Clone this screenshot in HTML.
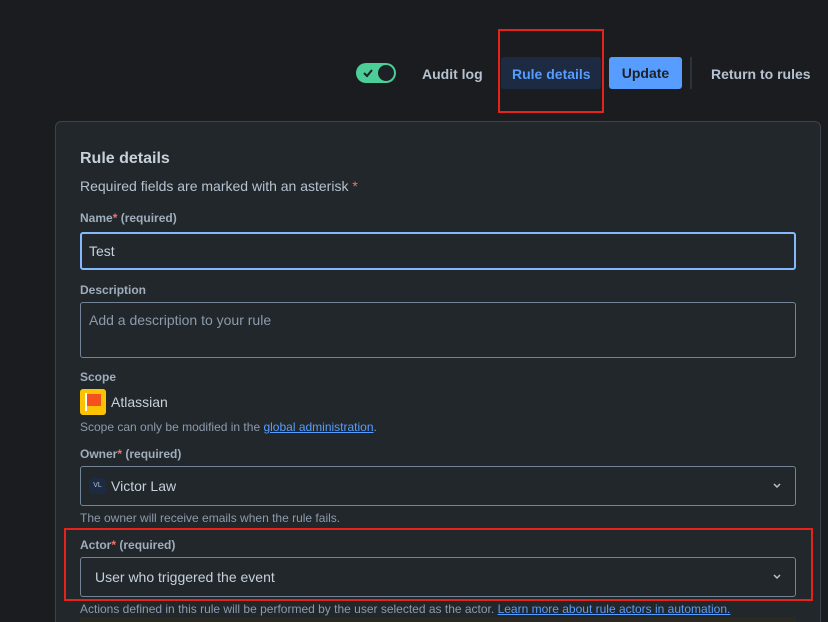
<!DOCTYPE html>
<html style="width:828px;height:622px;overflow:hidden"><head><style>
*{box-sizing:border-box;margin:0;padding:0}
body{width:828px;height:622px;overflow:hidden;background:#1a1c1f;font-family:"Liberation Sans",sans-serif;color:#c7d1db;position:relative}
.a{position:absolute}
.lbl{font-size:12px;font-weight:bold;color:#9fadbc}
.lbl .s{color:#f87168}
.help{font-size:12px;color:#8c9bab}
.inp{background:#22272b;border:1px solid #738496;border-radius:3px;font-size:14px;color:#c7d1db}
a{color:#579dff;text-decoration:underline}
</style></head><body>
<div class="a" style="left:356px;top:63px;width:40px;height:20px;border-radius:10px;background:#4bce97"></div>
<div class="a" style="left:378px;top:65px;width:16px;height:16px;border-radius:50%;background:#1d2125"></div>
<svg class="a" style="left:362px;top:67px" width="12" height="12"><path d="M2 6 L5 9 L10 3" stroke="#1d2125" stroke-width="2" fill="none"/></svg>
<div class="a" style="left:422px;top:66px;font-size:14px;font-weight:bold;color:#b6c2cf">Audit log</div>
<div class="a" style="left:501px;top:57px;width:100px;height:32px;background:#1c2b41;border-radius:3px"></div>
<div class="a" style="left:512px;top:66px;font-size:14px;font-weight:bold;color:#579dff">Rule details</div>
<div class="a" style="left:498px;top:29px;width:106px;height:84px;border:2px solid #e5231b"></div>
<div class="a" style="left:609px;top:57px;width:73px;height:32px;background:#579dff;border-radius:3px;font-size:14px;font-weight:bold;color:#1d2125;text-align:center;line-height:32px">Update</div>
<div class="a" style="left:690px;top:57px;width:2px;height:32px;background:#2c333a"></div>
<div class="a" style="left:711px;top:66px;font-size:14px;font-weight:bold;color:#b6c2cf">Return to rules</div>
<div class="a" style="left:55px;top:121px;width:766px;height:520px;background:#22272b;border:1px solid #3b434c;border-radius:6px"></div>
<div class="a" style="left:80px;top:150px;font-size:16px;font-weight:bold;color:#c7d1db">Rule details</div>
<div class="a" style="left:80px;top:178px;font-size:14px;color:#b6c2cf">Required fields are marked with an asterisk <span style="color:#f87168">*</span></div>
<div class="a lbl" style="left:80px;top:211px">Name<span class="s">*</span> (required)</div>
<div class="a inp" style="left:80px;top:232px;width:716px;height:38px;border:2px solid #85b8ff;padding:9px 7px">Test</div>
<div class="a lbl" style="left:80px;top:283px">Description</div>
<div class="a inp" style="left:80px;top:302px;width:716px;height:56px;padding:9px 8px;color:#8c9bab">Add a description to your rule</div>
<div class="a lbl" style="left:80px;top:370px">Scope</div>
<div class="a" style="left:80px;top:389px;width:26px;height:26px;background:#fcc400;border-radius:3px"></div>
<div class="a" style="left:85px;top:393px;width:2px;height:18px;background:#fff"></div>
<div class="a" style="left:87px;top:394px;width:14px;height:12px;background:#f4511e"></div>
<div class="a" style="left:111px;top:394px;font-size:14px;color:#c7d1db">Atlassian</div>
<div class="a help" style="left:80px;top:420px">Scope can only be modified in the <a>global administration</a>.</div>
<div class="a lbl" style="left:80px;top:447px">Owner<span class="s">*</span> (required)</div>
<div class="a inp" style="left:80px;top:466px;width:716px;height:40px"></div>
<div class="a" style="left:89px;top:478px;width:17px;height:16px;background:#1c2b41;border-radius:3px;font-size:7px;color:#b6c2cf;text-align:center;line-height:16px">VL</div>
<div class="a" style="left:111px;top:478px;font-size:14px;color:#c7d1db">Victor Law</div>
<svg class="a" style="left:772px;top:482px" width="10" height="8"><path d="M2 2 L5 5 L8 2" stroke="#b6c2cf" stroke-width="1.5" fill="none"/></svg>
<div class="a help" style="left:80px;top:511px">The owner will receive emails when the rule fails.</div>
<div class="a" style="left:64px;top:528px;width:749px;height:73px;border:2px solid #e5231b"></div>
<div class="a lbl" style="left:80px;top:538px">Actor<span class="s">*</span> (required)</div>
<div class="a inp" style="left:80px;top:557px;width:716px;height:40px;padding:11px 14px">User who triggered the event</div>
<svg class="a" style="left:772px;top:573px" width="10" height="8"><path d="M2 2 L5 5 L8 2" stroke="#b6c2cf" stroke-width="1.5" fill="none"/></svg>
<div class="a help" style="left:80px;top:602px">Actions defined in this rule will be performed by the user selected as the actor. <a>Learn more about rule actors in automation.</a></div>
<div class="a" style="left:80px;top:617px;width:716px;height:5px;background:#2a2a20"></div>
</body></html>
